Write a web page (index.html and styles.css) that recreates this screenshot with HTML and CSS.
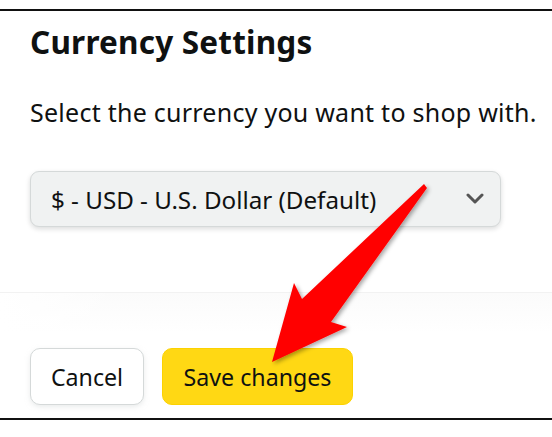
FILE: index.html
```html
<!DOCTYPE html>
<html lang="en">
<head>
    <meta charset="UTF-8">
    <meta name="viewport" content="width=device-width, initial-scale=1.0">
    <title>Currency Settings</title>
    <link rel="stylesheet" href="styles.css">
</head>
<body>
    <div class="frame">
        <div class="content">
            <h1 class="title">Currency Settings</h1>
            <p class="lead">Select the currency you want to shop with.</p>
            <div class="select">
                <span class="select-value">$ - USD - U.S. Dollar (Default)</span>
                <svg class="chevron" width="18" height="12" viewBox="0 0 18 12">
                    <path d="M2 2 L9 9 L16 2" fill="none" stroke="#555" stroke-width="3" stroke-linecap="round" stroke-linejoin="round"/>
                </svg>
            </div>
        </div>
        <div class="footer">
            <button class="btn btn-cancel">Cancel</button>
            <button class="btn btn-save">Save changes</button>
        </div>
    </div>
    <!-- red callout arrow drawn over the page -->
    <svg class="arrow" width="552" height="437" viewBox="0 0 552 437">
        <defs>
            <filter id="shade" x="-20%" y="-20%" width="140%" height="140%">
                <feDropShadow dx="2" dy="2" stdDeviation="2" flood-color="#000" flood-opacity="0.35"/>
            </filter>
        </defs>
        <polygon points="424,184 427,188 331,322 347,327 272,362 294,283 302,299" fill="#ff0000" filter="url(#shade)"/>
    </svg>
</body>
</html>
```

FILE: styles.css
```css
body {
    margin: 0;
    font-family: "Noto Sans", Arial, sans-serif;
    color: #0f1111;
    background: #fff;
}

.frame {
    margin-top: 9px;
    height: 407px;
    border-top: 2px solid #111;
    border-bottom: 2px solid #111;
    display: flex;
    flex-direction: column;
    overflow: hidden;
}

.content {
    padding: 11px 0 0 30px;
    height: 281px;
    box-sizing: border-box;
    flex-shrink: 0;
}

.title {
    margin: 0;
    font-size: 31.5px;
    font-weight: 700;
    line-height: 40px;
    letter-spacing: 0.2px;
}

.lead {
    margin: 34px 0 0;
    font-size: 25px;
    line-height: 32px;
    letter-spacing: 0.25px;
}

.select {
    margin-top: 43px;
    width: 471px;
    height: 56px;
    box-sizing: border-box;
    border: 1px solid #d5d9d9;
    border-radius: 9px;
    background: #f0f2f2;
    box-shadow: 0 2px 5px rgba(15, 17, 17, 0.15);
    display: flex;
    align-items: center;
    justify-content: space-between;
    padding: 0 16px 0 20px;
}

.select-value {
    font-size: 24.2px;
}

.footer {
    flex: 1;
    border-top: 1px solid #f2f2f2;
    background: linear-gradient(90deg, #fff, rgba(255, 255, 255, 0) 120px),
                linear-gradient(#fbfbfb, #fff 40px);
    display: flex;
    align-items: flex-end;
    gap: 18px;
    padding: 0 0 13px 30px;
}

.btn {
    font-family: inherit;
    font-size: 23.2px;
    color: #0f1111;
    height: 57px;
    border-radius: 10px;
    cursor: pointer;
    padding: 0;
}

.btn-cancel {
    width: 114px;
    background: #fff;
    border: 1px solid #d5d9d9;
    box-shadow: 0 2px 5px rgba(213, 217, 217, 0.5);
}

.btn-save {
    width: 191px;
    background: #ffd814;
    border: 1px solid #fcd200;
}

.arrow {
    position: absolute;
    left: 0;
    top: 0;
    pointer-events: none;
}
```
